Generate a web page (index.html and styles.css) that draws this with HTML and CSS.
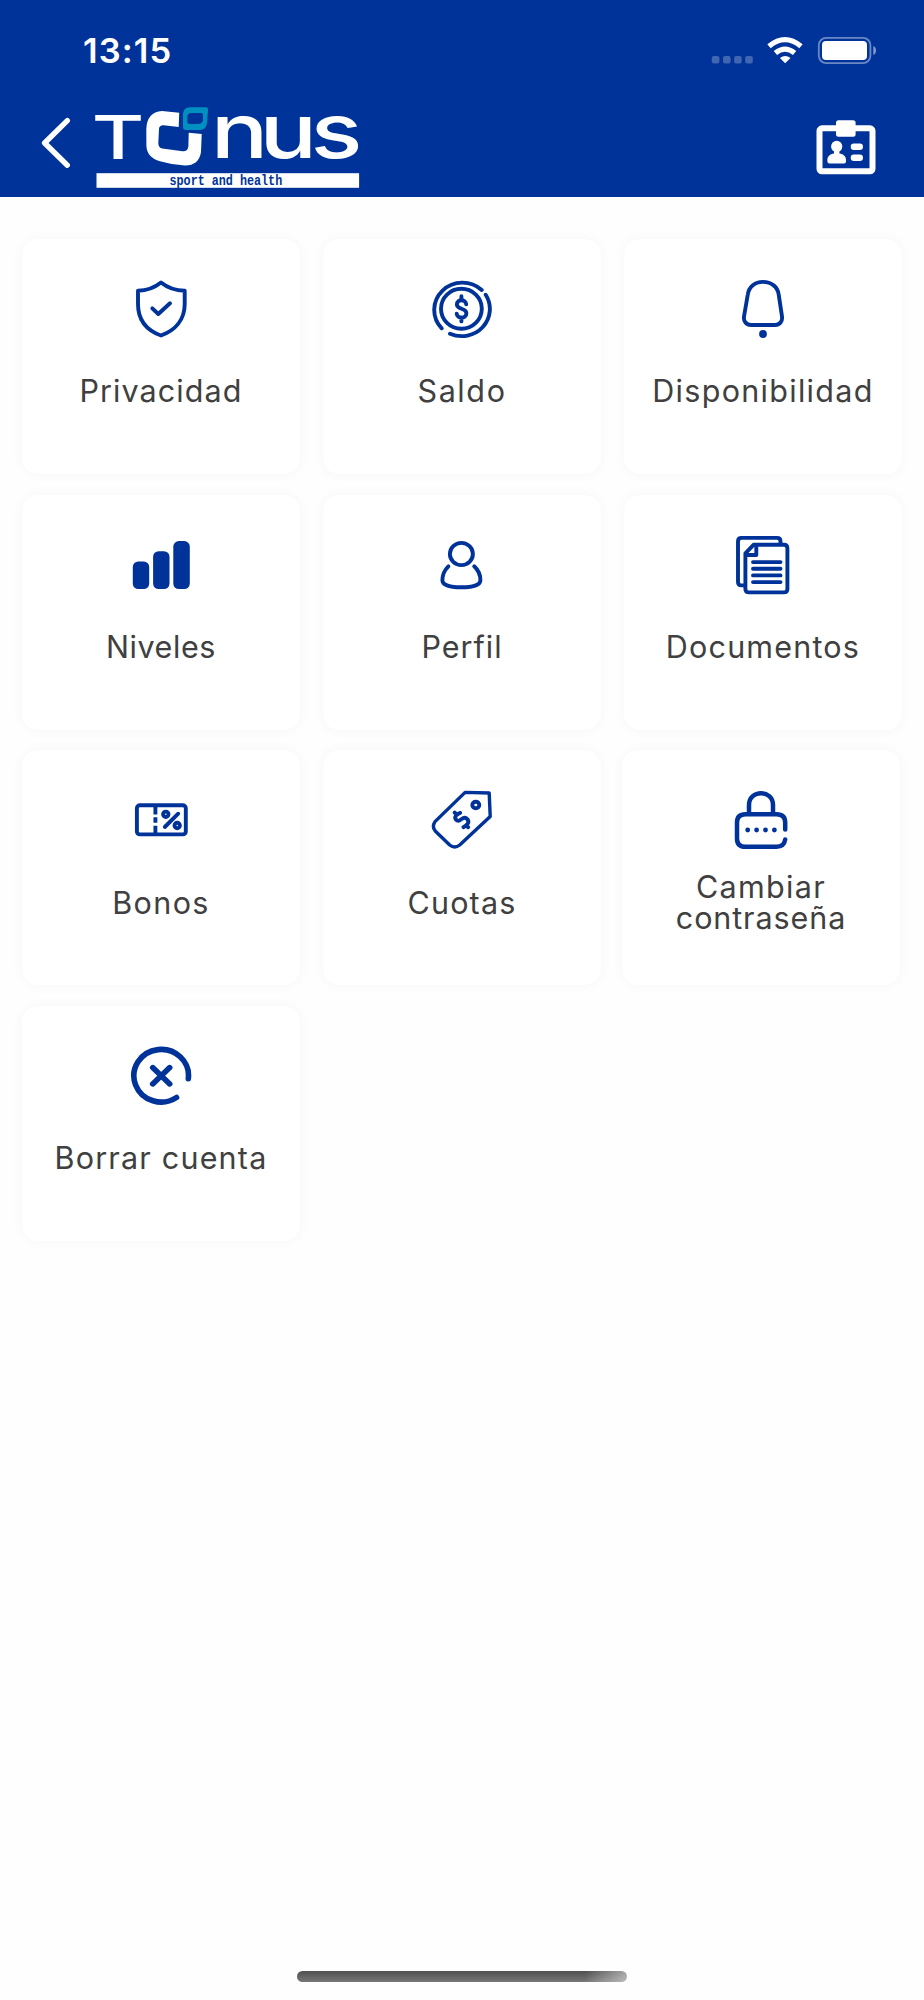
FILE: index.html
```html
<!DOCTYPE html>
<html lang="es">
<head>
<meta charset="utf-8">
<title>Tonus</title>
<link rel="stylesheet" href="styles.css">
</head>
<body>
<div class="app">
  <header class="header">
    <div class="status">
      <span class="time">13:15</span>
      <svg class="status-icons" viewBox="710 34 168 32" width="168" height="32">
        <g fill="#fff" fill-opacity=".25"><rect x="711.8" y="56" width="7.6" height="7.4" rx="2"/><rect x="723" y="56" width="7.6" height="7.4" rx="2"/><rect x="734.1" y="56" width="7.6" height="7.4" rx="2"/><rect x="745.2" y="56" width="7.6" height="7.4" rx="2"/></g>
        <g fill="none" stroke="#fff" stroke-width="5.2"><path d="M769 46.3Q785 33 801 46.3"/><path d="M775.4 53Q785 45.3 794.6 53"/></g>
        <path d="M785.2 63.2L779.9 58Q785.2 53.8 790.5 58Z" fill="#fff"/>
        <rect x="818.8" y="37.8" width="51.6" height="25.4" rx="7.5" fill="none" stroke="#fff" stroke-opacity=".42" stroke-width="1.8"/>
        <rect x="822" y="41" width="45" height="19" rx="4" fill="#fff"/>
        <path d="M873.3 46C877 47.5 877 53.5 873.3 55Z" fill="#fff" fill-opacity=".5"/>
      </svg>
    </div>
    <nav class="nav">
      <svg class="back" viewBox="40 114 32 56" width="32" height="56"><path d="M67.3 120.6L44.6 143L67.3 165.2" fill="none" stroke="#fff" stroke-width="5.4" stroke-linecap="round" stroke-linejoin="round"/></svg>
      <svg class="logo" viewBox="90 104 272 86" width="272" height="86">
        <g class="wordmark" fill="#fff">
          <text transform="translate(91.8 158.6) scale(1.34 1)" font-size="60">T</text>
          <text transform="translate(210.800 157.500) scale(1.260 1)" font-size="76">n</text>
          <text transform="translate(259.500 157.500) scale(1.260 1)" font-size="76">u</text>
          <text transform="translate(310.500 157.500) scale(1.270 1)" font-size="76">s</text>
        </g>
        <path fill="#fff" d="M179.2 112.7L178.7 127L163.5 125.3Q159.3 125.2 159 129L158.3 143Q158.3 147.8 162.3 148.5L182.5 151.2Q188.2 151.5 188.4 146L188.7 132.7L201.7 134L201 152Q199 165.5 185 165.5Q172 165 160 161.3Q147 157.5 146.4 146L146.3 129Q147 112 162 111Z"/>
        <path fill="#0090bf" fill-rule="evenodd" d="M190 107.3H206Q208.2 107.3 208 110L207 123Q206 130 200 130H186Q183 130 183 127V114Q183.500 107.500 190 107.3ZM191 113Q187.500 113 187.300 117V121.500Q187.300 124 190 124H198Q202.500 124 203 120V115Q203 113 201 113Z"/>
        <rect x="96.500" y="173.200" width="262.600" height="14.600" fill="#fff"/>
        <text class="tagline" transform="translate(169.500 184.800) scale(.81 1)">sport and health</text>
      </svg>
      <svg class="badge" viewBox="814 118 64 60" width="64" height="60">
        <rect x="819.500" y="128.300" width="53" height="43" rx="2.500" fill="none" stroke="#fff" stroke-width="6"/>
        <g fill="#fff"><rect x="836" y="120.200" width="19.600" height="16.500" rx="2.500"/><ellipse cx="836.700" cy="146.500" rx="5.600" ry="5.700"/><path d="M834 149h5.400v4.500c4 .5 6.600 3 6.600 6.500v1.500q0 2-2 2h-14.600q-2 0-2-2V160c0-3.500 2.600-6 6.600-6.500Z"/><rect x="850.700" y="143.500" width="12.300" height="6.500" rx="3.200"/><rect x="850.700" y="154.500" width="12.300" height="6.500" rx="3.200"/></g>
      </svg>
    </nav>
  </header>

  <main class="grid">
    <a class="card"><svg class="icon" viewBox="0 0 62 60"><path d="M31 3.500Q21 11.500 8 11.800V25C8 41 17 51.500 31 56.500C45 51.500 54.700 41 54.700 25V11.800Q41 11.500 31 3.500Z"/><path d="M22.300 29.300L28.300 35L40 24.300"/></svg><span class="label privacidad">Privacidad</span></a>
    <a class="card"><svg class="icon saldo-icon" viewBox="0.8 0 62 60"><ellipse cx="31.200" cy="29.700" rx="20.400" ry="20"/><path d="M51.500 11A28.200 27.200 0 0 0 11.500 49.300M55.500 15.700A28.200 27.200 0 0 1 19.800 54.700"/><path d="M31.200 17.200V21M31.200 38.500V42.400M36 25.300C35.600 20 26.800 19.800 26.700 25.500C26.700 31 36.200 28.500 36.200 34.300C36.200 40.200 26.800 40.200 26.500 34.700"/></svg><span class="label saldo">Saldo</span></a>
    <a class="card"><svg class="icon bell-icon" viewBox="0 0 62 60"><path d="M31 2.900C22.500 2.900 16.800 8 15.800 15.500L12 37.500C11.300 42.500 14.500 46 19 46H43C47.500 46 50.700 42.500 50 37.500L46.700 15.500C45.700 8 39.500 2.900 31 2.900Z"/><circle class="solid" cx="31" cy="55" r="3.900"/></svg><span class="label disponibilidad">Disponibilidad</span></a>

    <a class="card"><svg class="icon" viewBox="0 -0.4 62 60"><g class="solid"><rect x="2.800" y="26" width="16.400" height="27.600" rx="5.500"/><rect x="23.100" y="15.800" width="16.400" height="37.800" rx="5.500"/><rect x="43.300" y="5.700" width="16.500" height="47.900" rx="5.500"/></g></svg><span class="label niveles">Niveles</span></a>
    <a class="card"><svg class="icon" viewBox="0.8 -0.4 62 60"><ellipse cx="31.200" cy="18.600" rx="11.500" ry="11.100"/><path d="M18.200 30.900C14.500 34.500 12.200 40 12.200 44.800C12.200 49.500 20 51.900 31.200 51.900S50.200 49.500 50.200 44.800C50.200 40 47.900 34.500 44 30.900"/></svg><span class="label perfil">Perfil</span></a>
    <a class="card"><svg class="icon" viewBox="0 -0.4 62 60"><path d="M21.500 9.400H52Q55.400 9.400 55.400 13V53.500Q55.400 57 52 57H17Q13.400 57 13.400 53.500V18Z"/><path d="M14 19.600H24.300V10M48.500 8.500V6Q48.500 2.500 45 2.500H9.500Q6 2.500 6 6V46.500Q6 50 9.500 50H12.500M21 26.700H48.500M21 33.300H48.500M21 40H48.500M21 46.700H48.500"/></svg><span class="label documentos">Documentos</span></a>

    <a class="card"><svg class="icon" viewBox="0 0 62 60"><rect x="6.900" y="15.200" width="48.900" height="29.200" rx="3"/><path class="flat" d="M25.400 16V24.500M25.400 27.200V32.800M25.400 35.700V44"/><path d="M48.200 23.700L34.800 37"/><circle cx="35.800" cy="24.300" r="2.700"/><circle cx="47.200" cy="35.500" r="2.700"/></svg><span class="label bonos">Bonos</span></a>
    <a class="card"><svg class="icon" viewBox="0.8 0 62 60"><path class="thin" d="M34.900 2.400L59 3L60 26.500L29.500 55Q24.500 59 19.500 55L5 41Q1.500 36.700 4.800 31.600Z"/><ellipse cx="45.600" cy="15" rx="3.500" ry="3.200"/><path d="M24.400 22.500L26.800 24.700M35.800 35.400L38 37.300M30 22.900C26.500 24 23.600 27 25.800 29.700C29.800 33.800 32 25.500 36.200 28.300C40.700 32 36.500 35.500 33.200 37.200"/></svg><span class="label cuotas">Cuotas</span></a>
    <a class="card card-shift"><svg class="icon lock-icon" viewBox="0 0 62 60"><path d="M19 24V15C19 -.8 43 -.8 43 15V24M55.200 39.500V32.500Q55.200 24.200 46.500 24.200H15.500Q7 24.200 7 32.500V48.500Q7 56.800 15.500 56.800H46.500Q54 56.800 55.200 49.500"/><g class="solid"><circle cx="17.700" cy="40" r="2.400"/><circle cx="26.600" cy="40" r="2.400"/><circle cx="35.500" cy="40" r="2.400"/><circle cx="44.400" cy="40" r="2.400"/></g></svg><span class="label"><span class="cambiar">Cambiar</span><br><span class="contrasena">contraseña</span></span></a>

    <a class="card"><svg class="icon delete-icon" viewBox="0 0 62 60"><path d="M58.300 32.800A27.300 26.300 0 1 0 46.500 51.500M22.700 21.600L39.700 37.900M39.700 21.600L22.700 37.900"/></svg><span class="label borrar">Borrar cuenta</span></a>
  </main>
  <div class="home-bar"></div>
</div>
</body>
</html>
```
FILE: styles.css
```css
* { box-sizing: border-box; }
body { margin: 0; background: #fefefe; font-family: Inter, "Liberation Sans", sans-serif; }
.app { width: 924px; height: 2000px; display: flex; flex-direction: column; align-items: center; overflow: hidden; }

.header { width: 100%; height: 196.5px; background: #003399; color: #fff; flex: none; }
.status { height: 104px; padding: 34px 46px 0 83px; display: flex; justify-content: space-between; align-items: flex-start; }
.time { font-size: 34.5px; line-height: 34px; font-weight: 600; letter-spacing: 1.1px; }
.status-icons { flex: none; }
.nav { display: flex; align-items: flex-start; padding: 0 46px 0 40px; }
.back { margin: 10px 18px 0 0; }
.badge { margin: 14px 0 0 auto; }
.logo { overflow: visible; }
.wordmark { font-family: Inter, sans-serif; font-weight: 500; }
.tagline { font: 700 14.5px "Liberation Mono", monospace; fill: #003399; }

.grid { width: 880px; margin-top: 42.500px; display: grid; grid-template-columns: repeat(3, 278px); grid-auto-rows: 235px; gap: 20.700px 23px; }
.card { display: flex; flex-direction: column; align-items: center; padding-top: 40px; background: #fff; border-radius: 16px; box-shadow: 0 0 14px rgba(0, 0, 0, .035); }
.card-shift { margin: 0 2px 0 -2px; }
.icon { width: 62px; height: 60px; flex: none; fill: none; stroke: #003399; stroke-width: 3.900; stroke-linecap: round; stroke-linejoin: round; }
.icon .solid { fill: #003399; stroke: none; }
.icon .flat { stroke-linecap: butt; }
.icon .thin { stroke-width: 3.400; }
.lock-icon { stroke-width: 4.500; }
.delete-icon { stroke-width: 5.600; }

.label { height: 64px; margin-top: 20px; display: block; align-content: center; text-align: center; white-space: nowrap; color: #404040; font-size: 30.500px; line-height: 31.700px; font-weight: 400; }
.privacidad { letter-spacing: 1.1px; }
.saldo { letter-spacing: 1.6px; }
.disponibilidad { letter-spacing: 1.3px; }
.niveles { letter-spacing: .6px; }
.perfil { letter-spacing: 1px; }
.documentos { letter-spacing: 1.2px; }
.bonos { letter-spacing: 1.4px; }
.cuotas { letter-spacing: 1.200px; }
.cambiar { letter-spacing: 1.300px; }
.contrasena { letter-spacing: .9px; }
.borrar { letter-spacing: 1.200px; }

.home-bar { width: 330px; height: 11px; margin: auto 0 18px; border-radius: 6px; background: linear-gradient(100deg, transparent 87%, rgba(255, 255, 255, .5)), linear-gradient(#505050, #777); }
```
